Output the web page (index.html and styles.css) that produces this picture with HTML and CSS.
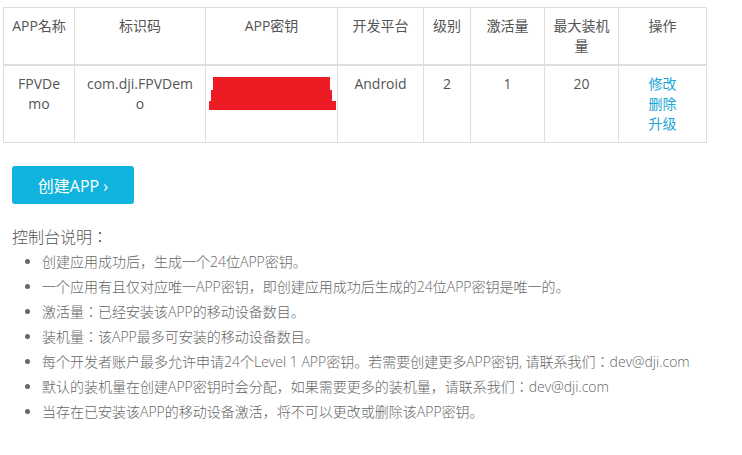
FILE: index.html
```html
<!DOCTYPE html>
<html lang="zh-CN">
<head>
<meta charset="utf-8">
<title>APP</title>
<link rel="stylesheet" href="styles.css">
</head>
<body>
<div class="page">
  <table class="apps">
    <colgroup>
      <col style="width:71px"><col style="width:131px"><col style="width:132px"><col style="width:86px"><col style="width:47px"><col style="width:74px"><col style="width:74px"><col style="width:88px">
    </colgroup>
    <thead>
      <tr>
        <th>APP名称</th><th>标识码</th><th>APP密钥</th><th>开发平台</th><th>级别</th><th>激活量</th><th>最大装机量</th><th>操作</th>
      </tr>
    </thead>
    <tbody>
      <tr>
        <td class="name">FPVDemo</td>
        <td>com.dji.FPVDemo</td>
        <td class="keycell"><div class="redact"><div class="r1"></div><div class="r2"></div><div class="r3"></div></div></td>
        <td>Android</td>
        <td>2</td>
        <td>1</td>
        <td>20</td>
        <td class="ops"><a href="#">修改</a><a href="#">删除</a><a href="#">升级</a></td>
      </tr>
    </tbody>
  </table>
  <div class="actions"><a class="btn" href="#">创建APP ›</a></div>
  <div class="notes">
    <h3>控制台说明：</h3>
    <ul>
      <li>创建应用成功后，生成一个24位APP密钥。</li>
      <li>一个应用有且仅对应唯一APP密钥，即创建应用成功后生成的24位APP密钥是唯一的。</li>
      <li>激活量：已经安装该APP的移动设备数目。</li>
      <li>装机量：该APP最多可安装的移动设备数目。</li>
      <li>每个开发者账户最多允许申请24个Level 1 APP密钥。若需要创建更多APP密钥, 请联系我们：dev@dji.com</li>
      <li>默认的装机量在创建APP密钥时会分配，如果需要更多的装机量，请联系我们：dev@dji.com</li>
      <li>当存在已安装该APP的移动设备激活，将不可以更改或删除该APP密钥。</li>
    </ul>
  </div>
</div>
</body>
</html>
```
FILE: styles.css
```css
* { box-sizing: border-box; }
html, body { margin: 0; padding: 0; background: #fff; }
body {
  font-family: "Open Sans", "Noto Sans CJK JP", sans-serif;
  font-feature-settings: "locl" 0;
  color: #555;
  font-size: 14px;
}
.page { padding: 7px 3px 0 3px; }
.apps {
  border-collapse: collapse;
  table-layout: fixed;
  width: 703px;
}
.apps th, .apps td {
  border: 1px solid #ddd;
  text-align: center;
  vertical-align: top;
  font-weight: normal;
  line-height: 20px;
  font-size: 14px;
  word-break: break-all;
}
.apps th { padding: 8px 5px; }
.apps td { padding: 8px 10px; }
.apps td.name { padding: 8px 12px; }
.apps thead th { border-bottom: 2px solid #ddd; }
.apps tbody td { height: 77px; }
.apps td.keycell { padding: 11px 0 0 0; }
.redact div { background: #ed1c24; }
.r1 { height: 13px; margin: 0 7px 0 7px; }
.r2 { height: 11px; margin: 0 5px 0 5px; }
.r3 { height: 9px; margin: 0 1px 0 3px; }
.ops a {
  display: block;
  color: #1ba6d6;
  text-decoration: none;
}
.actions { padding: 23px 0 0 9px; }
.btn {
  display: inline-flex;
  align-items: center;
  justify-content: center;
  width: 122px;
  height: 38px;
  background: #10b3dd;
  color: #fff;
  border-radius: 3px;
  font-size: 16px;
  text-decoration: none;
}
.notes { padding: 23px 0 0 9px; }
.notes h3 {
  margin: 0;
  font-weight: 300;
  font-size: 16px;
  line-height: 20px;
  color: #555;
}
.notes ul {
  margin: 2px 0 0 0;
  padding-left: 30px;
}
.notes li {
  line-height: 25px;
  font-size: 14px;
  font-weight: 300;
  color: #666;
}
```
